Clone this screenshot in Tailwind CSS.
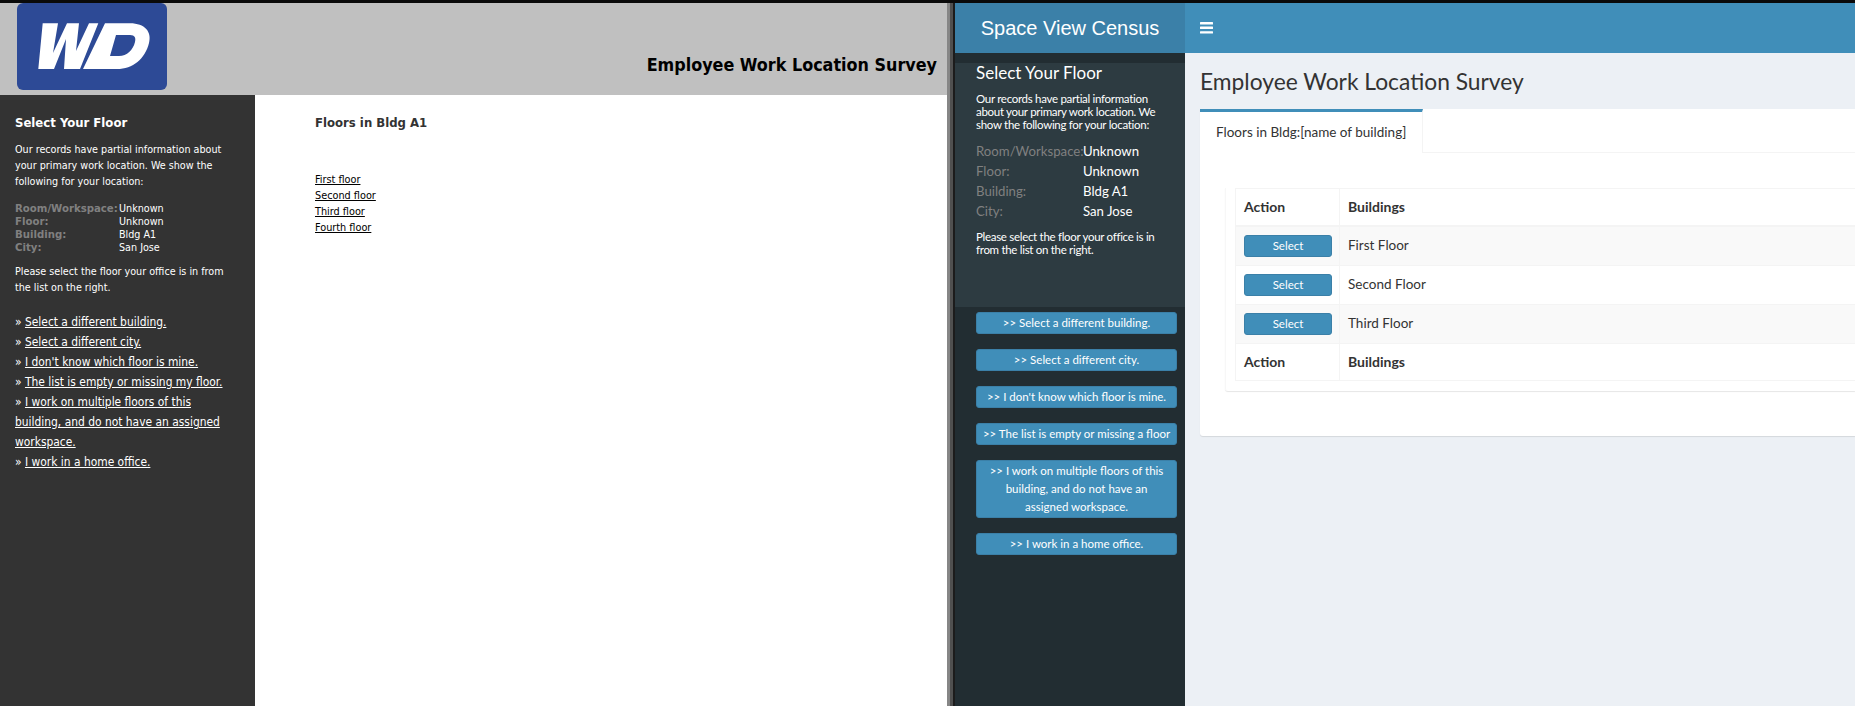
<!DOCTYPE html>
<html lang="en">

<head>
    <meta charset="UTF-8">
    <title>Employee Work Location Survey</title>
    <script src="https://cdn.jsdelivr.net/npm/@tailwindcss/browser@4"></script>
</head>

<body class="w-[1855px] h-[706px] overflow-hidden bg-black flex flex-col">
    <div class="h-[3px] shrink-0 bg-[#0a0a0a]"></div>

    <div class="flex flex-1 min-h-0">
        <!-- Old version -->
        <div class="w-[947px] shrink-0 flex flex-col bg-white font-['DejaVu_Sans',sans-serif] [font-stretch:condensed]">
            <div class="h-[92px] shrink-0 bg-[#c0c0c0] flex items-start justify-between pl-[17px] pr-[10px]">
                <svg class="w-[150px] h-[87px]" viewBox="0 0 150 87">
                    <rect width="150" height="87" rx="6" fill="#2d4a96" />
                    <path fill="#fff" d="M25.7 20.3H41L36 50L50 20.3H62L59 48L72 20.3H81.3L63 66H47L49 36L37 66H21.3Z" />
                    <path fill="#fff" fill-rule="evenodd" d="M88 20.3H113C128 20.3 135 29 132 40C128 56 116 66 100 66H66ZM99 32H113C118 32 119 35 118 39C116 47 110 53 102 53H93Z" />
                </svg>
                <h1 class="mt-[52px] text-[17.8px] leading-5 font-bold text-black">Employee Work Location Survey</h1>
            </div>
            <div class="flex flex-1 min-h-0">
                <div class="w-[255px] shrink-0 bg-[#333333] text-white px-[15px] pt-[20px] text-[10.7px] leading-4">
                    <h2 class="text-[13px] leading-4 font-bold mb-[11px]">Select Your Floor</h2>
                    <p>Our records have partial information about your primary work location. We show the following for your location:</p>
                    <div class="grid grid-cols-[104px_1fr] leading-[13px] mt-[12px] mb-[10px]">
                        <span class="font-bold text-[#808080] text-[11.3px]">Room/Workspace:</span><span>Unknown</span>
                        <span class="font-bold text-[#808080] text-[11.3px]">Floor:</span><span>Unknown</span>
                        <span class="font-bold text-[#808080] text-[11.3px]">Building:</span><span>Bldg A1</span>
                        <span class="font-bold text-[#808080] text-[11.3px]">City:</span><span>San Jose</span>
                    </div>
                    <p>Please select the floor your office is in from the list on the right.</p>
                    <div class="mt-[16px] text-[11.9px] leading-5">
                        <div>» <a href="#" class="underline">Select a different building.</a></div>
                        <div>» <a href="#" class="underline">Select a different city.</a></div>
                        <div>» <a href="#" class="underline">I don't know which floor is mine.</a></div>
                        <div>» <a href="#" class="underline">The list is empty or missing my floor.</a></div>
                        <div>» <a href="#" class="underline">I work on multiple floors of this building, and do not have an assigned workspace.</a></div>
                        <div>» <a href="#" class="underline">I work in a home office.</a></div>
                    </div>
                </div>
                <div class="pl-[60px] pt-[20px] text-[#333333]">
                    <h2 class="text-[13px] leading-4 font-bold mb-[41px]">Floors in Bldg A1</h2>
                    <div class="flex flex-col items-start text-[10.8px] leading-4 text-black">
                        <a href="#" class="underline">First floor</a>
                        <a href="#" class="underline">Second floor</a>
                        <a href="#" class="underline">Third floor</a>
                        <a href="#" class="underline">Fourth floor</a>
                    </div>
                </div>
            </div>
        </div>

        <!-- Divider between the two windows -->
        <div class="w-[3px] shrink-0 bg-[#868686]"></div>
        <div class="w-[3px] shrink-0 bg-[#505050]"></div>
        <div class="w-[2px] shrink-0 bg-[#1c1c1c]"></div>

        <!-- New version -->
        <div class="flex-1 min-w-0 flex flex-col bg-[#ecf0f5] font-['Lato',sans-serif] text-[#333333]">
            <div class="h-[50px] shrink-0 flex bg-[#408eb9] text-white">
                <div class="w-[230px] bg-[#3b80a8] flex items-center justify-center font-['Liberation_Sans',sans-serif] text-[20px]">Space View Census</div>
                <svg class="w-[14px] h-[14px] ml-[15px] self-center" viewBox="0 0 14 14" fill="#fff">
                    <rect y="1" width="13" height="2.4" rx="0.5" />
                    <rect y="5.6" width="13" height="2.4" rx="0.5" />
                    <rect y="10.2" width="13" height="2.4" rx="0.5" />
                </svg>
            </div>
            <div class="flex flex-1 min-h-0">
                <div class="w-[230px] shrink-0 bg-[#222d32] pt-[10px] text-white">
                    <div class="h-[244px] bg-[#2d3b41] pl-[21px] pr-[14px]">
                        <h2 class="text-[17px] leading-5">Select Your Floor</h2>
                        <p class="mt-[9px] text-[11.5px] tracking-[-0.3px] leading-[13px]">Our records have partial information about your primary work location. We show the following for your location:</p>
                        <div class="grid grid-cols-[107px_1fr] text-[13.2px] leading-5 mt-[10px] mb-[9px]">
                            <span class="text-[#808080]">Room/Workspace:</span><span>Unknown</span>
                            <span class="text-[#808080]">Floor:</span><span>Unknown</span>
                            <span class="text-[#808080]">Building:</span><span>Bldg A1</span>
                            <span class="text-[#808080]">City:</span><span>San Jose</span>
                        </div>
                        <p class="text-[11.5px] tracking-[-0.3px] leading-[13px]">Please select the floor your office is in from the list on the right.</p>
                    </div>
                    <div class="flex flex-col gap-[15px] mt-[5px] ml-[21px] w-[201px] text-[11.5px] leading-[18px] text-center">
                        <a href="#" class="block px-[6px] py-[1px] rounded-[3px] bg-[#408eb9] border border-[#3b80a8]">&gt;&gt; Select a different building.</a>
                        <a href="#" class="block px-[6px] py-[1px] rounded-[3px] bg-[#408eb9] border border-[#3b80a8]">&gt;&gt; Select a different city.</a>
                        <a href="#" class="block px-[6px] py-[1px] rounded-[3px] bg-[#408eb9] border border-[#3b80a8]">&gt;&gt; I don't know which floor is mine.</a>
                        <a href="#" class="block px-[1px] py-[1px] rounded-[3px] bg-[#408eb9] border border-[#3b80a8] whitespace-nowrap">&gt;&gt; The list is empty or missing a floor</a>
                        <a href="#" class="block px-[6px] py-[1px] rounded-[3px] bg-[#408eb9] border border-[#3b80a8]">&gt;&gt; I work on multiple floors of this building, and do not have an assigned workspace.</a>
                        <a href="#" class="block px-[6px] py-[1px] rounded-[3px] bg-[#408eb9] border border-[#3b80a8]">&gt;&gt; I work in a home office.</a>
                    </div>
                </div>
                <div class="flex-1 min-w-0 pl-[15px]">
                    <h1 class="h-[56px] flex items-center text-[22.8px]">Employee Work Location Survey</h1>
                    <div class="h-[327px] bg-white rounded-bl-[3px] shadow-[0_1px_1px_rgba(0,0,0,0.1)]">
                        <div class="h-[44px] border-b border-[#f4f4f4]">
                            <div class="w-[223px] h-[44px] border-t-[3px] border-t-[#408eb9] border-r border-r-[#f4f4f4] bg-white flex items-center pl-[16px] text-[13.5px]">Floors in Bldg:[name of building]</div>
                        </div>
                        <div class="ml-[25px] mt-[35px] h-[203px] pl-[9px] border-l border-l-[#f7f7f7] rounded-bl-[3px] shadow-[0_1px_1px_rgba(0,0,0,0.1)] overflow-hidden">
                            <table class="w-[700px] text-[13.5px] border-collapse border border-[#f4f4f4]">
                                <thead>
                                    <tr class="h-[37px] border-b-2 border-[#f4f4f4] font-bold text-[14px]">
                                        <th class="w-[104px] pl-[8px] text-left border-r border-[#f4f4f4]">Action</th>
                                        <th class="pl-[8px] text-left">Buildings</th>
                                    </tr>
                                </thead>
                                <tbody>
                                    <tr class="h-[40px] bg-[#f9f9f9] border-b border-[#f4f4f4]">
                                        <td class="pl-[8px] border-r border-[#f4f4f4]"><button class="block w-[88px] h-[22px] rounded-[3px] bg-[#408eb9] border border-[#3b80a8] text-white text-[11.5px]">Select</button></td>
                                        <td class="pl-[8px] pb-[2px]">First Floor</td>
                                    </tr>
                                    <tr class="h-[39px] border-b border-[#f4f4f4]">
                                        <td class="pl-[8px] border-r border-[#f4f4f4]"><button class="block w-[88px] h-[22px] rounded-[3px] bg-[#408eb9] border border-[#3b80a8] text-white text-[11.5px]">Select</button></td>
                                        <td class="pl-[8px] pb-[2px]">Second Floor</td>
                                    </tr>
                                    <tr class="h-[39px] bg-[#f9f9f9] border-b border-[#f4f4f4]">
                                        <td class="pl-[8px] border-r border-[#f4f4f4]"><button class="block w-[88px] h-[22px] rounded-[3px] bg-[#408eb9] border border-[#3b80a8] text-white text-[11.5px]">Select</button></td>
                                        <td class="pl-[8px] pb-[2px]">Third Floor</td>
                                    </tr>
                                </tbody>
                                <tfoot>
                                    <tr class="h-[37px] font-bold text-[14px]">
                                        <th class="pl-[8px] pb-[2px] text-left border-r border-[#f4f4f4]">Action</th>
                                        <th class="pl-[8px] pb-[2px] text-left">Buildings</th>
                                    </tr>
                                </tfoot>
                            </table>
                        </div>
                    </div>
                </div>
            </div>
        </div>
    </div>
</body>

</html>
